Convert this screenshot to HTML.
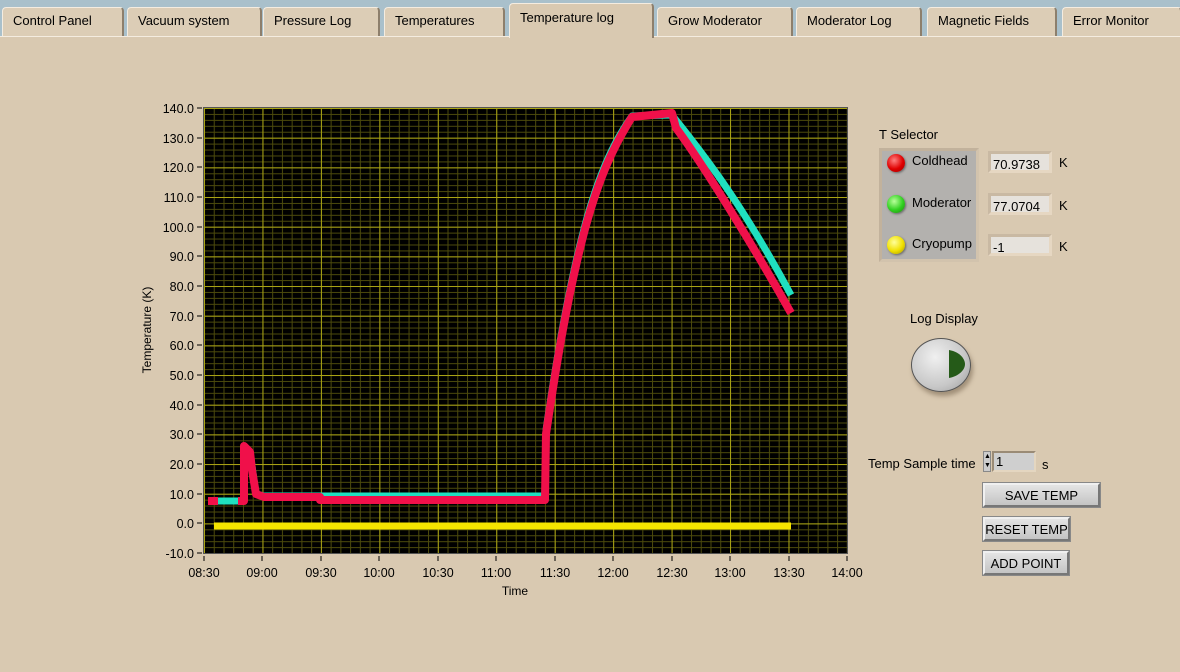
<!DOCTYPE html>
<html><head><style>
body{margin:0;width:1180px;height:671px;overflow:hidden;background:#d9c9b1;font-family:"Liberation Sans",sans-serif;font-size:13px;color:#000;position:relative}
.top{position:absolute;left:0;top:0;width:1180px;height:37px;background:#a9c0cb}
.panel{position:absolute;left:0;top:36px;width:1180px;height:635px;background:#d9c9b1;border-top:1px solid #f4ece0}
.tab{position:absolute;top:7px;height:29px;background:#dccdb6;border:1px solid #f4ece0;border-right:2px solid #8d7f6c;border-bottom:none;border-radius:4px 4px 0 0;box-sizing:border-box;padding:5px 0 0 10px;white-space:nowrap}
.tab.sel{top:3px;height:35px;background:#d9c9b1;padding-top:6px;z-index:2}
.abs{position:absolute;white-space:nowrap}
.num{position:absolute;width:64px;height:22px;background:#e6e2dc;border:3px solid #e6d7c2;border-top-color:#c9b9a3;border-left-color:#c9b9a3;box-sizing:border-box;padding:3px 0 0 2px;font-size:13px}
.btn{position:absolute;height:24px;background:linear-gradient(#e4e4e4,#c4c4c4);border:2px solid #777;border-top-color:#f0f0f0;border-left-color:#f0f0f0;box-shadow:0 0 0 1px #888;box-sizing:border-box;text-align:center;padding-top:3px;font-size:13px}
.led{position:absolute;width:18px;height:18px;border-radius:50%;box-shadow:1px 1px 2px #666}
</style></head><body>
<div class="top"></div>
<div class="panel"></div>
<div class="tab" style="left:2px;width:122px">Control Panel</div>
<div class="tab" style="left:127px;width:135px">Vacuum system</div>
<div class="tab" style="left:263px;width:117px">Pressure Log</div>
<div class="tab" style="left:384px;width:121px">Temperatures</div>
<div class="tab sel" style="left:509px;width:145px">Temperature log</div>
<div class="tab" style="left:657px;width:136px">Grow Moderator</div>
<div class="tab" style="left:796px;width:126px">Moderator Log</div>
<div class="tab" style="left:927px;width:130px">Magnetic Fields</div>
<div class="tab" style="left:1062px;width:120px">Error Monitor</div>

<svg class="abs" style="left:0;top:0" width="1180" height="671">
<defs>
<pattern id="mx" x="204" y="0" width="9.74" height="671" patternUnits="userSpaceOnUse"><rect x="0" y="0" width="1" height="671" fill="#4c4a0c"/></pattern>
<pattern id="my" x="0" y="108" width="1180" height="5.934" patternUnits="userSpaceOnUse"><rect x="0" y="0" width="1180" height="1" fill="#4c4a0c"/></pattern>
<pattern id="Mx" x="204" y="0" width="58.45" height="671" patternUnits="userSpaceOnUse"><rect x="0" y="0" width="1" height="671" fill="#aaa414"/></pattern>
<pattern id="My" x="0" y="108" width="1180" height="29.67" patternUnits="userSpaceOnUse"><rect x="0" y="0" width="1180" height="1" fill="#aaa414"/></pattern>
</defs>
<rect x="204" y="108" width="643" height="445" fill="#000"/>
<rect x="204" y="108" width="643" height="445" fill="url(#mx)"/>
<rect x="204" y="108" width="643" height="445" fill="url(#my)"/>
<rect x="204" y="108" width="643" height="445" fill="url(#Mx)"/>
<rect x="204" y="108" width="643" height="445" fill="url(#My)"/>
<rect x="203.5" y="107.5" width="644" height="446" fill="none" stroke="#555"/>
<g stroke="#000" stroke-width="1">
<path d="M197 108h5M197 138h5M197 167h5M197 197h5M197 227h5M197 256h5M197 286h5M197 316h5M197 345h5M197 375h5M197 405h5M197 434h5M197 464h5M197 494h5M197 523h5M197 553h5"/>
<path d="M204 556v5M262 556v5M321 556v5M379 556v5M438 556v5M496 556v5M555 556v5M613 556v5M672 556v5M730 556v5M789 556v5M847 556v5"/>
</g>
<g font-family="Liberation Sans,sans-serif" font-size="12.5" text-anchor="end">
<text x="194" y="113">140.0</text><text x="194" y="143">130.0</text><text x="194" y="172">120.0</text><text x="194" y="202">110.0</text><text x="194" y="232">100.0</text><text x="194" y="261">90.0</text><text x="194" y="291">80.0</text><text x="194" y="321">70.0</text><text x="194" y="350">60.0</text><text x="194" y="380">50.0</text><text x="194" y="410">40.0</text><text x="194" y="439">30.0</text><text x="194" y="469">20.0</text><text x="194" y="499">10.0</text><text x="194" y="528">0.0</text><text x="194" y="558">-10.0</text>
</g>
<g font-family="Liberation Sans,sans-serif" font-size="12.5" text-anchor="middle">
<text x="204" y="577">08:30</text><text x="262" y="577">09:00</text><text x="321" y="577">09:30</text><text x="379" y="577">10:00</text><text x="438" y="577">10:30</text><text x="496" y="577">11:00</text><text x="555" y="577">11:30</text><text x="613" y="577">12:00</text><text x="672" y="577">12:30</text><text x="730" y="577">13:00</text><text x="789" y="577">13:30</text><text x="847" y="577">14:00</text>
<text x="515" y="595" font-size="12">Time</text>
<text transform="translate(151 330) rotate(-90)" font-size="12">Temperature (K)</text>
</g>
<path d="M214 526H791" stroke="#f5e400" stroke-width="7" fill="none"/>
<path d="M208 501H244 L244 452 L250 452 L256 494 L264 496 H545 L546 430 C552 390 565 300 585 225 C600 170 615 140 632 116 L672 115 C700 150 740 200 791 295" stroke="#1fe0c0" stroke-width="7" fill="none" stroke-linejoin="round"/>
<path d="M208 501H218 M238 501H244 L244 446 L250 452 L252 470 L256 494 L264 497 H320 L320 500 H545 L546 434 C552 394 565 304 585 229 C600 174 615 144 632 117 L672 113 L676 128 C700 160 750 240 791 313" stroke="#f0104a" stroke-width="8" fill="none" stroke-linejoin="round"/>
</svg>

<div class="abs" style="left:879px;top:127px">T Selector</div>
<div class="abs" style="left:879px;top:148px;width:100px;height:114px;background:#b3b1ae;border:3px solid #d2c3ad;border-top-color:#c2b29c;border-left-color:#c2b29c;box-sizing:border-box"></div>
<div class="led" style="left:887px;top:154px;background:radial-gradient(circle at 40% 35%,#ff8080,#e00000 55%,#900)"></div>
<div class="led" style="left:887px;top:195px;background:radial-gradient(circle at 40% 35%,#b8ff9a,#30d020 55%,#208010)"></div>
<div class="led" style="left:887px;top:236px;background:radial-gradient(circle at 40% 35%,#ffff9a,#f0e000 55%,#a09000)"></div>
<div class="abs" style="left:912px;top:153px">Coldhead</div>
<div class="abs" style="left:912px;top:195px">Moderator</div>
<div class="abs" style="left:912px;top:236px">Cryopump</div>
<div class="num" style="left:988px;top:151px">70.9738</div>
<div class="num" style="left:988px;top:193px">77.0704</div>
<div class="num" style="left:988px;top:234px">-1</div>
<div class="abs" style="left:1059px;top:155px">K</div>
<div class="abs" style="left:1059px;top:198px">K</div>
<div class="abs" style="left:1059px;top:239px">K</div>

<div class="abs" style="left:910px;top:311px">Log Display</div>
<div class="abs" style="left:911px;top:338px;width:58px;height:52px;border-radius:50%;background:radial-gradient(circle at 40% 35%,#f0f0f0,#c8c8c8 60%,#9a9a9a);border:1px solid #555;box-shadow:2px 4px 5px #a08f78"></div>
<svg class="abs" style="left:945px;top:348px" width="22" height="32"><path d="M4 2 C16 4 20 12 20 16 C20 22 14 28 4 30 Z" fill="#255a18"/></svg>

<div class="abs" style="left:868px;top:456px">Temp Sample time</div>
<div class="abs" style="left:983px;top:451px;width:8px;height:21px;background:#ccc;border:1px solid #888;box-sizing:border-box;font-size:7px;line-height:9px;text-align:center">▲<br>▼</div>
<div class="abs" style="left:992px;top:451px;width:44px;height:21px;background:#cfcfcf;border:2px solid #e4d6c0;border-top-color:#9a8b76;border-left-color:#9a8b76;box-sizing:border-box;padding:1px 0 0 2px">1</div>
<div class="abs" style="left:1042px;top:457px">s</div>
<div class="btn" style="left:983px;top:483px;width:117px">SAVE TEMP</div>
<div class="btn" style="left:983px;top:517px;width:87px">RESET TEMP</div>
<div class="btn" style="left:983px;top:551px;width:86px">ADD POINT</div>
</body></html>
